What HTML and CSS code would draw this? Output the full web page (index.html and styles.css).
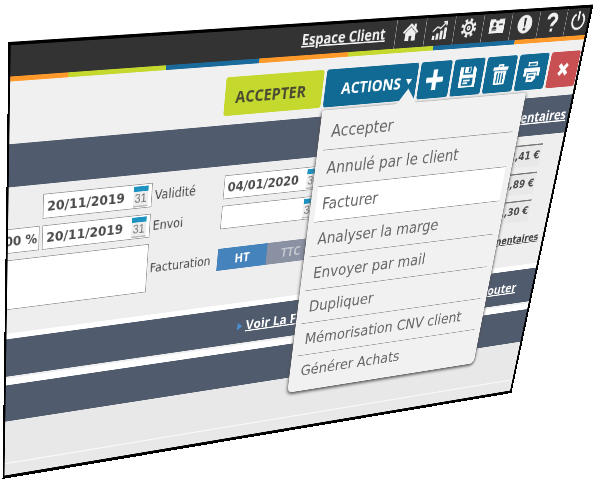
FILE: index.html
```
<!DOCTYPE html>
<html lang="fr">
<head>
<meta charset="utf-8">
<title>Espace Client</title>
<link rel="stylesheet" href="styles.css">
</head>
<body>
<div class="stage">
<main class="panel">
  <header class="topbar">
    <a class="client" href="#">Espace Client</a>
    <nav class="shortcuts">
      <a href="#" aria-label="Accueil"><svg viewBox="0 0 24 24"><path d="M12 1 0 12l2 2L12 5l10 9 2-2-4-4V2h-3v3z"/><path d="M12 6l-8 7v10h6v-6h4v6h6V13z"/></svg></a>
      <a href="#" aria-label="Statistiques"><svg viewBox="0 0 24 24"><path d="M1 19h4v5H1zM7 16h4v8H7zM13 13h4v11h-4zM19 9h4v15h-4z"/><path class="line" d="M1 14l7-6 5 2 9-8M17 2h5v5"/></svg></a>
      <a href="#" aria-label="Réglages"><svg viewBox="0 0 24 24"><circle class="teeth" cx="12" cy="12" r="10"/><circle class="rim" cx="12" cy="12" r="7"/><circle class="line" cx="12" cy="12" r="2"/></svg></a>
      <a href="#" aria-label="Contact"><svg viewBox="0 0 24 24"><path fill-rule="evenodd" d="M0 3h9v2h6V3h9v18H0zM8 7a2.500 2.500 0 1 0 .1 0zM4 16h8c0-4-8-4-8 0zM15 9h6v2h-6zM4 17h7v1H4z"/></svg></a>
      <a href="#" aria-label="Alertes"><svg viewBox="0 0 24 24"><path fill-rule="evenodd" d="M12 0a12 12 0 1 0 .1 0zM10 4h4l-1 11h-2zM10 17h4v3h-4z"/></svg></a>
      <a href="#" aria-label="Aide"><svg viewBox="0 0 24 24"><path class="thick" d="M5 8c0-8 14-8 13 0 0 4-6 4-6 9"/><path d="M10 20h4v4h-4z"/></svg></a>
      <a href="#" aria-label="Quitter"><svg viewBox="0 0 24 24"><path class="rim" d="M7 4a10 10 0 1 0 10 0M12 0v12"/></svg></a>
    </nav>
  </header>
  <div class="stripe"></div>
  <div class="toolbar">
    <button class="btn accept">ACCEPTER</button>
    <div class="dropdown">
      <button class="btn actions" aria-expanded="true">ACTIONS<span class="caret"></span></button>
      <div class="popup">
        <ul class="menu">
          <li><button>Accepter</button></li>
          <li><button>Annulé par le client</button></li>
          <li><button class="current">Facturer</button></li>
          <li><button>Analyser la marge</button></li>
          <li><button>Envoyer par mail</button></li>
          <li><button>Dupliquer</button></li>
          <li><button>Mémorisation CNV client</button></li>
          <li><button>Générer Achats</button></li>
        </ul>
      </div>
    </div>
    <button class="btn tool" aria-label="Ajouter"><svg viewBox="0 0 24 24"><path d="M9 0h6v9h9v6h-9v9H9v-9H0V9h9z"/></svg></button>
    <button class="btn tool" aria-label="Enregistrer"><svg viewBox="0 0 24 24"><path fill-rule="evenodd" d="M0 0h5v9h14V0h2l3 3v21H0zM4 13v9h16v-9z"/><path d="M7 0h9v7H7zM6 15h10v2H6zM6 18h7v2H6z"/><path class="hole" d="M12 1h3v5h-3z"/></svg></button>
    <button class="btn tool" aria-label="Supprimer"><svg viewBox="0 0 24 24"><path fill-rule="evenodd" d="M8 0h8v3h7v4H1V3h7zM10 2v1h4V2zM3 8h18l-1 16H4zM7 10v12h2V10zM11 10v12h2V10zM15 10v12h2V10z"/></svg></button>
    <button class="btn tool" aria-label="Imprimer"><svg viewBox="0 0 24 24"><path fill-rule="evenodd" d="M5 0h14v5H5zM7 2v2h10V2zM0 7h24v10h-4v-5H4v5H0zM5 13h14v7l-4 4H5zM8 15v2h8v-2zM8 19v2h5v-2z"/></svg></button>
    <button class="btn tool close" aria-label="Fermer"><svg viewBox="0 0 24 24"><path d="M3 7l4-4 5 5 5-5 4 4-5 5 5 5-4 4-5-5-5 5-4-4 5-5z"/></svg></button>
  </div>
  <div class="band first"><a href="#">Commentaires</a></div>
  <form class="form">
    <div class="fields">
      <div class="box date start"><input id="creation" aria-label="Date" value="20/11/2019"><span class="cal">31</span></div>
      <label for="validite">Validité</label>
      <div class="box date"><input id="validite" value="04/01/2020"><span class="cal">31</span></div>
      <div class="box rate"><input aria-label="Taux" value="00 %"></div>
      <div class="box date"><input aria-label="Date" value="20/11/2019"><span class="cal">31</span></div>
      <label for="envoi">Envoi</label>
      <div class="box date"><input id="envoi"><span class="cal">31</span></div>
      <textarea class="notes" aria-label="Notes"></textarea>
      <span class="label">Facturation</span>
      <div class="toggle"><button type="button" class="on">HT</button><button type="button">TTC</button></div>
    </div>
    <div class="totals">
      <output>2,41 €</output>
      <output>8,89 €</output>
      <output>1,30 €</output>
      <a href="#">Commentaires</a>
    </div>
  </form>
  <div class="band second"><a class="voir" href="#">Voir La Facture</a><a href="#">Ajouter</a></div>
  <div class="band third"></div>
  <div class="foot"></div>
</main>
</div>
</body>
</html>
```
FILE: styles.css
```
* { box-sizing: border-box; }
body {
  margin: 0;
  background: #fff;
  font-family: "DejaVu Sans", sans-serif;
}
button, input, textarea { font: inherit; color: inherit; border: 0; margin: 0; }
svg { display: block; width: 25px; height: 25px; fill: currentColor; overflow: visible; }
.line, .rim, .thick, .teeth { fill: none; stroke: currentColor; stroke-width: 2; }
.rim { stroke-width: 3; }
.thick { stroke-width: 5; }
.teeth { stroke-width: 4; stroke-dasharray: 4 4; }
.hole { fill: #116a94; }

.stage { height: 100vh; overflow: hidden; }

/* The whole screen is shown tilted in perspective */
.panel {
  position: relative;
  width: 900px;
  background: #f0f0f0;
  transform-origin: 0 0;
  transform: matrix3d(0.757967, -0.040848, 0, 0.00018192, -0.009268, 0.868592, 0, 0.00029282, 0, 0, 1, 0, 8.5, 42, 0, 1);
}
.panel::after {
  content: "";
  position: absolute;
  inset: 0;
  border: 4px solid #000;
  border-width: 4px 4px 5px 3px;
  pointer-events: none;
}

.topbar {
  display: flex;
  justify-content: flex-end;
  align-items: center;
  height: 41px;
  background: #333;
  color: #f0f0f0;
}
.client { margin-right: 16px; font: bold 20px "Open Sans", sans-serif; color: inherit; }
.shortcuts { display: flex; }
.shortcuts a {
  display: flex;
  align-items: center;
  justify-content: center;
  width: 48px;
  height: 41px;
  border-left: 1px solid #999;
  color: inherit;
}
.shortcuts a:last-child { width: 44px; }
.stripe {
  height: 6px;
  background: repeating-linear-gradient(90deg, #ff9a2a 0 138px, #c4d82e 138px 276px, #1b6a9c 276px 414px) -56px 0 / 1242px 100%;
}

.toolbar {
  display: flex;
  justify-content: flex-end;
  gap: 4px;
  height: 77px;
  padding: 15px 5px 0;
}
.btn {
  height: 50px;
  padding: 0;
  border-radius: 4px;
  background: #116a94;
  color: #fff;
  font: bold 22px "Open Sans", sans-serif;
}
.accept { width: 151px; padding-right: 10px; background: #c4d82e; color: #4a4a32; }
.actions { display: flex; align-items: center; justify-content: flex-end; gap: 8px; width: 149px; padding-right: 8px; }
.caret { border: 5px solid transparent; border-top: 8px solid #fff; border-bottom: 0; }
.tool { display: flex; align-items: center; justify-content: center; width: 52px; }
.tool svg { width: 28px; height: 28px; }
.tool.close svg { width: 24px; height: 24px; }
.close { background: #c95052; }
.dropdown { position: relative; z-index: 2; }
.popup {
  position: absolute;
  top: 54px;
  left: 0;
  width: 344px;
  padding: 4px 11px 8px 9px;
  border-radius: 3px 3px 8px 8px;
  background: #f1f1f1;
  box-shadow: 0 2px 5px 1px #555;
}
.popup::before {
  content: "";
  position: absolute;
  top: -20px;
  left: 121px;
  border: 16px solid transparent;
  border-top: 0;
  border-bottom: 20px solid #f1f1f1;
}
.menu { margin: 0; padding: 0; list-style: none; color: #666; }
.menu li { border-bottom: 1px solid #999; }
.menu li:last-child { border: 0; }
.menu button {
  display: block;
  width: 100%;
  height: 50px;
  padding: 0 10px;
  background: none;
  font-size: 23px;
  text-align: left;
  white-space: nowrap;
}
.menu .current { background: #fff; }

.band {
  display: flex;
  align-items: center;
  justify-content: flex-end;
  height: 55px;
  background: #505b6e;
}
.band a { color: #fff; font: bold 20px "Open Sans", sans-serif; }
.first { padding-right: 8px; }
.second { justify-content: space-between; padding: 0 35px 0 366px; }
.voir::before {
  content: "";
  display: inline-block;
  margin-right: 6px;
  border: 6px solid transparent;
  border-left: 8px solid #4a8fd0;
  border-right: 0;
}
.third { margin-top: 3px; border-top: 10px solid #fff; height: 65px; }

.form {
  display: flex;
  justify-content: space-between;
  height: 208px;
  padding-top: 13px;
  border-bottom: 8px solid #fff;
  background: #eee;
  color: #4c4c4c;
  font-size: 17px;
}
.fields {
  display: grid;
  grid-template-columns: 48px 160px 102px 160px;
  grid-template-rows: 33px 33px 69px;
  gap: 9px 4px;
  align-items: center;
}
.box {
  display: flex;
  align-items: center;
  height: 33px;
  padding: 0 5px;
  border: 1px solid #999;
  background: #fff;
}
.start { grid-column: 2; }
.rate { border-left: 0; padding: 0 2px 0 0; }
.box input { flex: 1; min-width: 0; width: 0; padding: 0; background: none; font-weight: bold; font-size: 18px; }
.rate input { font-size: 17px; text-align: right; direction: ltr; }
.rate { justify-content: flex-end; overflow: hidden; }
.rate input { flex: none; width: 56px; }
.cal {
  width: 22px;
  height: 28px;
  border-top: 7px solid #1c93c0;
  border-bottom: 2px solid #bbb;
  background: #eee;
  color: #777;
  font: 16px/19px "Liberation Sans", sans-serif;
  text-align: center;
}
.notes { grid-column: 1 / 3; width: 100%; height: 100%; border: 1px solid #999; background: #fff; resize: none; }
.toggle { display: flex; }
.toggle button {
  flex: 1;
  height: 32px;
  padding: 0;
  background: #8a91a3;
  color: #c4c8d0;
  font: bold 18px "Open Sans", sans-serif;
}
.toggle .on { background: #4583bd; color: #fff; }
.totals { display: flex; flex-direction: column; align-items: flex-end; gap: 9px; padding-right: 12px; }
.totals output {
  width: 110px;
  height: 33px;
  margin-right: 28px;
  padding-right: 2px;
  border-top: 2px solid #777;
  background: #e8e8e8;
  font-weight: bold;
  font-size: 16px;
  line-height: 30px;
  text-align: right;
}
.totals a { margin-top: 10px; color: #444; font-size: 15px; font-weight: bold; }
.foot { height: 90px; padding-top: 65px; background: #e8e8e8; }
.foot::before { content: ""; display: block; height: 2px; background: #f8f8f8; }
```
